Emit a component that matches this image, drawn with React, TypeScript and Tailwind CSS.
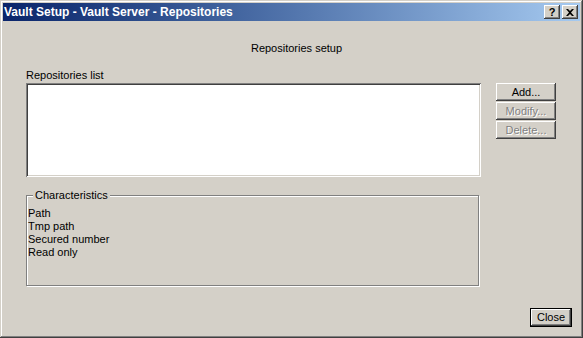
import React from 'react';

const raised =
  'shadow-[inset_-1px_-1px_#404040,inset_1px_1px_#ffffff,inset_-2px_-2px_#808080,inset_2px_2px_#d4d0c8]';

const Btn: React.FC<{ label: string; disabled?: boolean; className?: string }> = ({ label, disabled, className }) => (
  <div
    className={`flex items-center justify-center bg-[#d4d0c8] text-[11px] leading-none ${raised} ${
      disabled ? 'text-[#808080] [text-shadow:1px_1px_#ffffff]' : 'text-black'
    } ${className ?? ''}`}
  >
    {label}
  </div>
);

const TitleButton: React.FC<{ children: React.ReactNode }> = ({ children }) => (
  <div className={`w-[16px] h-[14px] bg-[#d4d0c8] flex items-center justify-center ${raised}`}>{children}</div>
);

export default function App() {
  return (
    <div
      className="w-[583px] h-[338px] bg-[#d4d0c8] p-[3px] flex flex-col text-black shadow-[inset_-1px_-1px_#404040,inset_1px_1px_#d4d0c8,inset_-2px_-2px_#808080,inset_2px_2px_#ffffff]"
      style={{ fontFamily: '"Liberation Sans", Arial, sans-serif' }}
    >
      {/* title bar */}
      <div className="h-[18px] bg-gradient-to-r from-[#0a246a] to-[#a6caf0] flex items-center pl-[1px] pr-[2px]">
        <span className="text-white font-bold text-[12px] leading-none flex-1">Vault Setup - Vault Server - Repositories</span>
        <div className="flex gap-[2px]">
          <TitleButton>
            <span className="text-[11px] font-bold leading-none">?</span>
          </TitleButton>
          <TitleButton>
            <svg width="8" height="7" viewBox="0 0 8 7">
              <path d="M0 0h2l2 2 2-2h2L5 3.5 8 7H6L4 5 2 7H0l3-3.5z" fill="#000" />
            </svg>
          </TitleButton>
        </div>
      </div>

      {/* body */}
      <div className="flex-1 flex flex-col text-[11px] leading-[13px]">
        <div className="mt-[21px] text-center pl-[10px]">Repositories setup</div>

        <div className="mt-[14px] pl-[23px]">Repositories list</div>

        <div className="mt-[1px] flex pl-[23px]">
          <div className="w-[455px] h-[94px] bg-white shadow-[inset_1px_1px_#808080,inset_-1px_-1px_#ffffff,inset_2px_2px_#404040,inset_-2px_-2px_#d4d0c8]" />
          <div className="ml-[15px] flex flex-col gap-[1px]">
            <Btn label="Add..." className="w-[60px] h-[18px]" />
            <Btn label="Modify..." disabled className="w-[60px] h-[18px]" />
            <Btn label="Delete..." disabled className="w-[60px] h-[18px]" />
          </div>
        </div>

        <div className="relative mt-[18px] ml-[23px] w-[453px] h-[91px] border border-[#808080] shadow-[inset_1px_1px_#ffffff,1px_1px_#ffffff] pt-[11px] pl-[1px]">
          <span className="absolute -top-[7px] left-[6px] bg-[#d4d0c8] px-[2px]">Characteristics</span>
          <div>Path</div>
          <div>Tmp path</div>
          <div>Secured number</div>
          <div>Read only</div>
        </div>

        <div className="flex-1 flex items-end justify-end pr-[8px] pb-[8px]">
          <div className="border border-black">
            <Btn label="Close" className="w-[40px] h-[17px]" />
          </div>
        </div>
      </div>
    </div>
  );
}
